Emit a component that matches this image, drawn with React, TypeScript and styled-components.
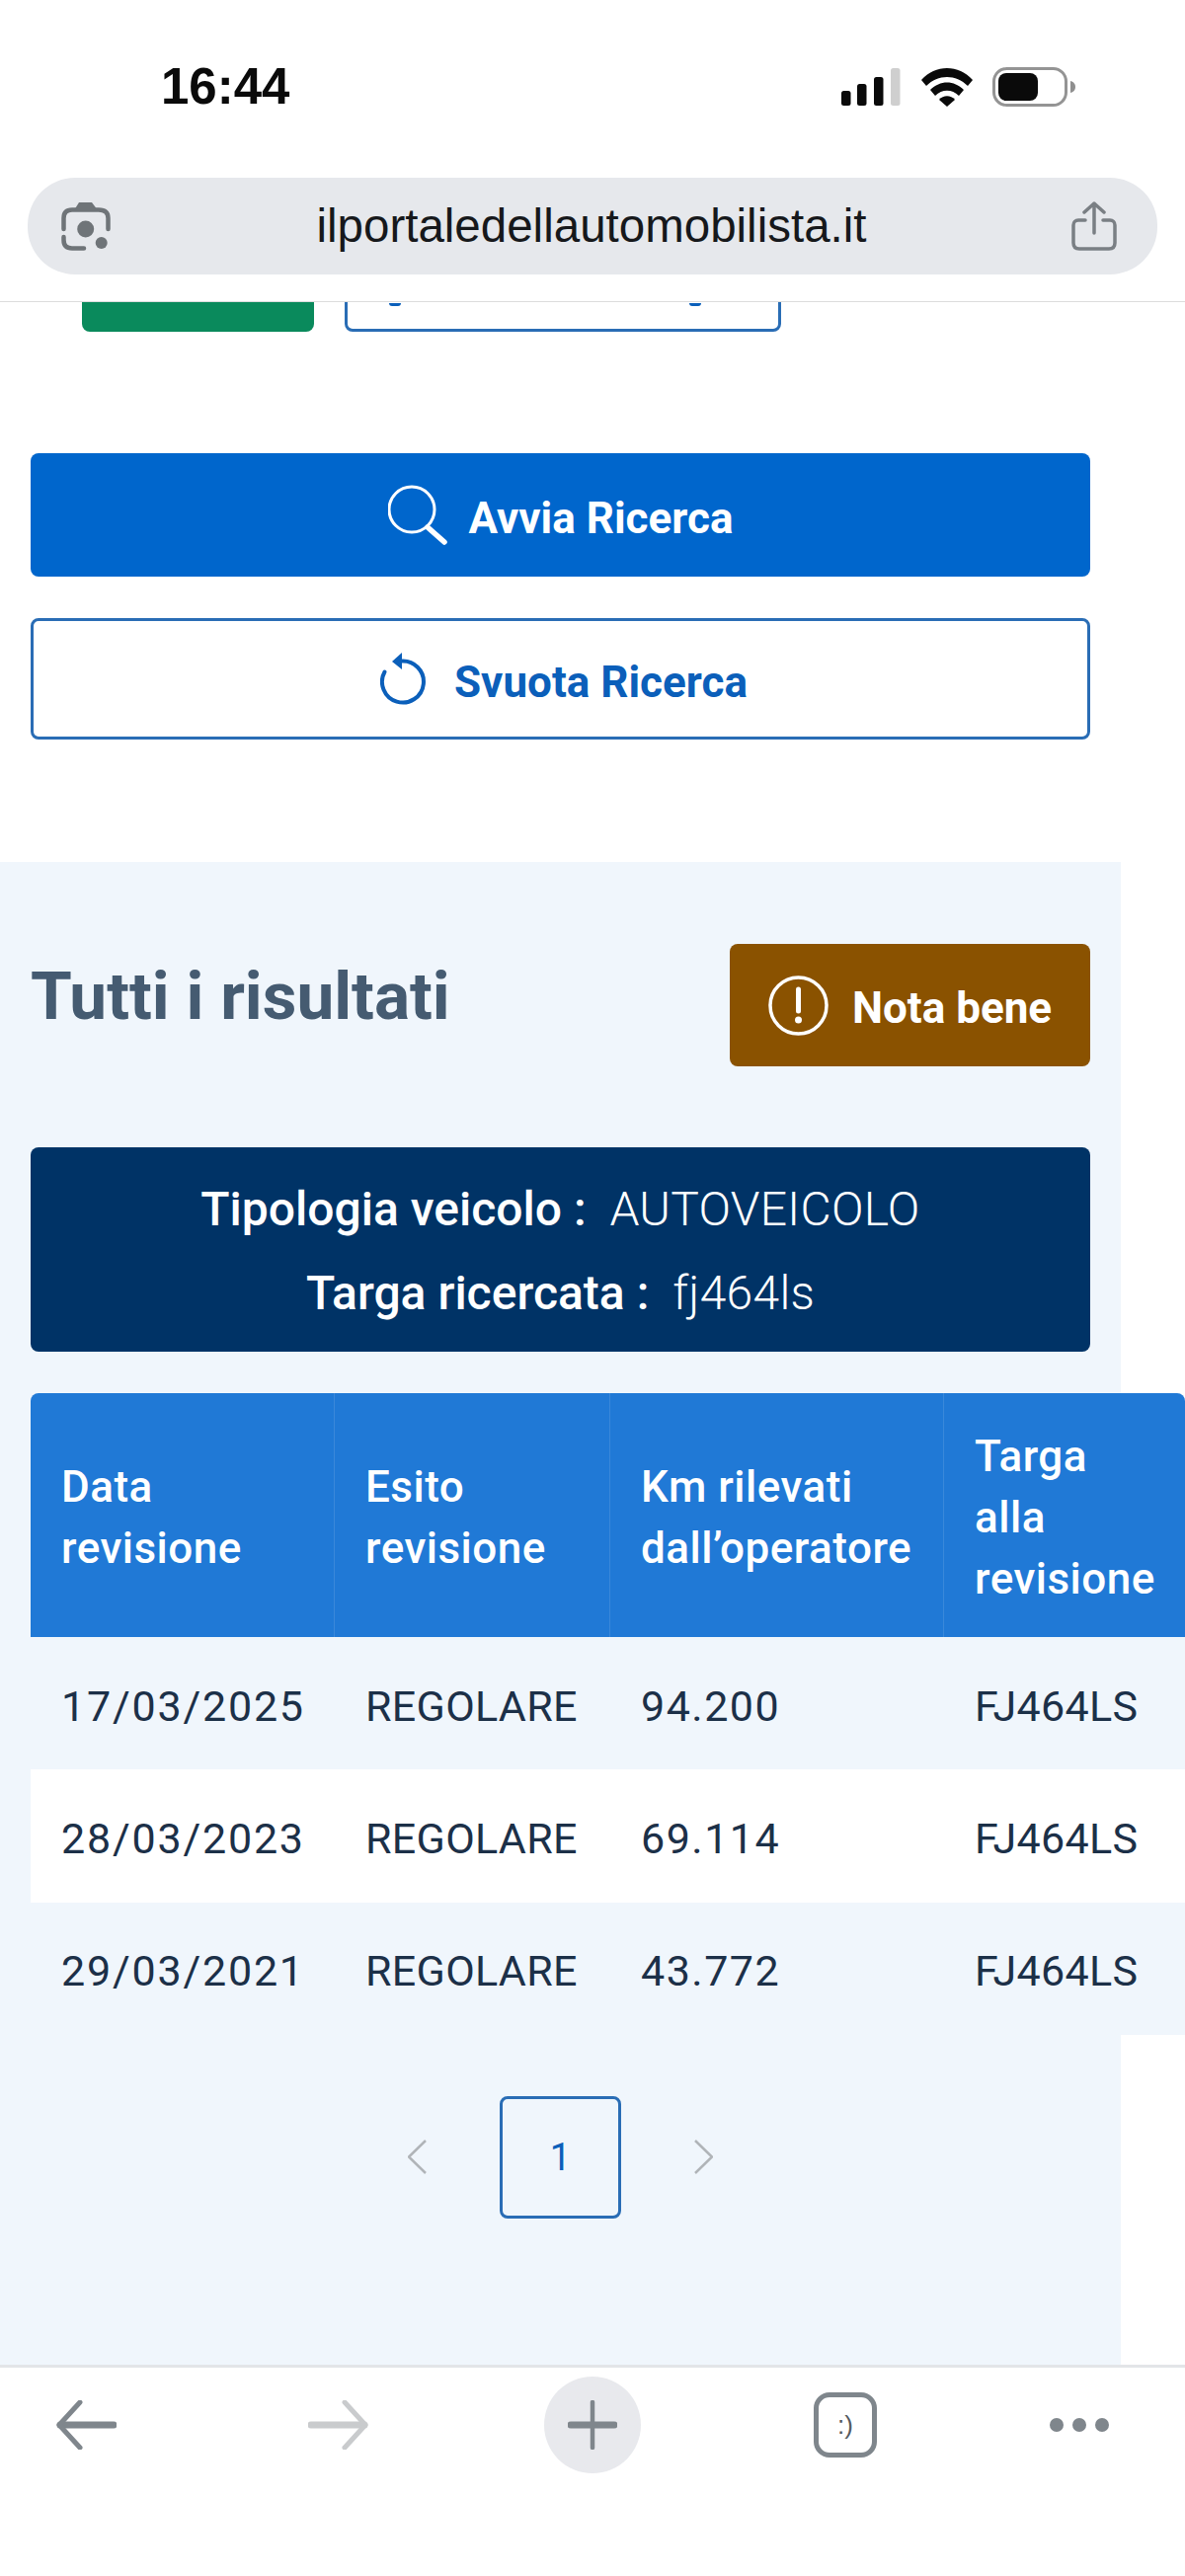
import React from 'react';
import styled, { createGlobalStyle } from 'styled-components';

const colors = {
  blue: '#0066cc',
  blueText: '#0b5fba',
  blueBorder: '#2a6db5',
  tableHead: '#2079d6',
  navy: '#003366',
  brown: '#8a5200',
  section: '#f0f6fc',
  slate: '#455b71',
  cellText: '#1c3048',
  chromeGrey: '#7f868c',
  urlBar: '#e6e8ec',
};

const siteFont = 'Roboto, "Noto Sans", sans-serif';

const GlobalStyle = createGlobalStyle`
  html, body {
    margin: 0;
    padding: 0;
    background: #fff;
  }
  * { box-sizing: border-box; }
`;

const Page = styled.div`
  width: 1200px;
  height: 2609px;
  overflow: hidden;
  display: flex;
  flex-direction: column;
  background: #fff;
  font-family: ${siteFont};
`;

const BrowserHeader = styled.header`
  height: 306px;
  flex: none;
  border-bottom: 1px solid #dcdcdc;
  padding: 0 28px;
`;

const StatusBar = styled.div`
  height: 180px;
  display: flex;
  justify-content: space-between;
  align-items: flex-start;
  padding: 68px 82px 0 135px;
`;

const Clock = styled.div`
  font-family: "Liberation Sans", sans-serif;
  font-size: 51px;
  font-weight: 700;
  line-height: 40px;
  color: #0a0a0a;
`;

const StatusIcons = styled.div`
  display: flex;
  align-items: flex-start;
  gap: 20.5px;
`;

const UrlBar = styled.div`
  height: 98px;
  border-radius: 48px;
  background: ${colors.urlBar};
  display: flex;
  align-items: center;
  justify-content: space-between;
  padding: 0 41px 0 33px;
`;

const UrlText = styled.div`
  font-family: "Liberation Sans", sans-serif;
  font-size: 47.5px;
  color: #16181b;
  line-height: 60px;
`;

const ClippedRow = styled.div`
  height: 30px;
  flex: none;
  display: flex;
  align-items: flex-end;
  gap: 31px;
  padding-left: 83px;
  overflow: hidden;
`;

const GreenStub = styled.div`
  width: 235px;
  height: 60px;
  background: #0a8a5c;
  border-radius: 0 0 8px 8px;
`;

const OutlineStub = styled.div`
  width: 442px;
  height: 60px;
  background: #fff;
  border: 3px solid ${colors.blueBorder};
  border-radius: 0 0 8px 8px;
  display: flex;
  justify-content: space-between;
  padding: 28px 78px 0 42px;
`;

const StubMark = styled.span`
  width: 12px;
  height: 3px;
  border-radius: 0 0 6px 6px;
  background: ${colors.blueText};
`;

const Actions = styled.div`
  flex: none;
  display: flex;
  flex-direction: column;
  gap: 42px;
  padding: 123px 96px 124px 31px;
`;

const ActionButton = styled.button<{ $outline?: boolean }>`
  height: ${p => (p.$outline ? 123 : 125)}px;
  width: 100%;
  border-radius: 8px;
  border: ${p => (p.$outline ? `3px solid ${colors.blueBorder}` : 'none')};
  background: ${p => (p.$outline ? '#fff' : colors.blue)};
  color: ${p => (p.$outline ? colors.blueText : '#fff')};
  display: flex;
  align-items: center;
  justify-content: center;
  gap: ${p => (p.$outline ? 29 : 21)}px;
  font-family: inherit;
  font-size: 44px;
  font-weight: 700;
  padding: 0 0 0 ${p => (p.$outline ? 7 : 0)}px;
`;

const ButtonLabel = styled.span`
  padding-top: 6px;
`;

const ResultsSection = styled.section`
  flex: 1;
  width: 1135px;
  background: ${colors.section};
  padding: 83px 31px 0;
`;

const TitleRow = styled.div`
  display: flex;
  justify-content: space-between;
  align-items: flex-start;
`;

const Title = styled.h2`
  margin: 18px 0 0;
  font-size: 67.5px;
  line-height: 70px;
  font-weight: 700;
  color: ${colors.slate};
`;

const NoteButton = styled.button`
  width: 365px;
  height: 124px;
  border: none;
  border-radius: 8px;
  background: ${colors.brown};
  color: #fff;
  display: flex;
  align-items: center;
  justify-content: center;
  gap: 24px;
  font-family: inherit;
  font-size: 44px;
  font-weight: 700;
  padding: 0;
`;

const SummaryPanel = styled.div`
  margin-top: 82px;
  height: 207px;
  border-radius: 8px;
  padding-top: 3px;
  background: ${colors.navy};
  color: #fff;
  display: flex;
  flex-direction: column;
  align-items: center;
  justify-content: center;
  gap: 25px;
  font-size: 48px;
  line-height: 60px;
`;

const SummaryLine = styled.div`
  font-weight: 500;
  white-space: pre;
`;

const SummaryValue = styled.span`
  font-weight: 300;
  letter-spacing: 0.3px;
`;

const ResultsTable = styled.table`
  margin-top: 42px;
  width: 1169px;
  table-layout: fixed;
  border-collapse: separate;
  border-spacing: 0;
`;

const HeadCell = styled.th`
  height: 247px;
  padding: 5px 0 0 31px;
  background: ${colors.tableHead};
  border-right: 1px solid #3a88da;
  color: #fff;
  text-align: left;
  font-size: 44px;
  letter-spacing: 0.5px;
  line-height: 62px;
  font-weight: 500;
  white-space: nowrap;

  &:first-child { border-top-left-radius: 8px; }
  &:last-child { border-top-right-radius: 8px; border-right: none; }
`;

const BodyRow = styled.tr<{ $striped: boolean }>`
  background: ${p => (p.$striped ? colors.section : '#fff')};
`;

const BodyCell = styled.td<{ $tracking: number }>`
  height: 134.33px;
  padding: 5px 0 0 31px;
  font-size: 43px;
  font-weight: 400;
  letter-spacing: ${p => p.$tracking}px;
  color: ${colors.cellText};
  white-space: nowrap;
`;

const Pagination = styled.nav`
  margin-top: 62px;
  display: flex;
  justify-content: center;
  align-items: center;
  gap: 74px;
`;

const PageBox = styled.div`
  width: 123px;
  height: 124px;
  border: 3px solid ${colors.blueBorder};
  border-radius: 8px;
  display: flex;
  align-items: center;
  justify-content: center;
  color: ${colors.blueText};
  font-size: 38px;
`;

const BottomBar = styled.footer`
  height: 214px;
  flex: none;
  border-top: 3px solid #e3e5e8;
  padding-top: 9px;
  background: #fff;
`;

const BarGrid = styled.div`
  height: 98px;
  display: grid;
  grid-template-columns: 174px 336px 180px 332px 142px;
  align-items: center;
  justify-items: center;
`;

const PlusCircle = styled.div`
  width: 98px;
  height: 98px;
  border-radius: 50%;
  background: #e8e9ed;
  display: flex;
  align-items: center;
  justify-content: center;
`;

const TabCount = styled.div`
  width: 64px;
  height: 66px;
  border: 5px solid ${colors.chromeGrey};
  border-radius: 16px;
  display: flex;
  align-items: center;
  justify-content: center;
  font-family: "Liberation Sans", sans-serif;
  font-size: 26px;
  color: #555b60;
`;

const Dots = styled.div`
  display: flex;
  gap: 9px;
`;

const Dot = styled.span`
  width: 14px;
  height: 14px;
  border-radius: 50%;
  background: ${colors.chromeGrey};
`;

const SignalIcon = () => (
  <svg width="60" height="39" viewBox="0 0 60 39">
    <rect x="0" y="24" width="9.5" height="15" rx="2.5" fill="#0a0a0a" />
    <rect x="16" y="17" width="9.5" height="22" rx="2.5" fill="#0a0a0a" />
    <rect x="33" y="10" width="9.5" height="29" rx="2.5" fill="#0a0a0a" />
    <rect x="50" y="1" width="9.5" height="38" rx="2.5" fill="#cfcfcf" />
  </svg>
);

const WifiIcon = () => (
  <svg width="52" height="40" viewBox="0 0 52 40" fill="#0a0a0a">
    <path d="M0 13C14 -3 38 -3 52 13L47 19C35 7 17 7 5 19Z" />
    <path d="M9 23C19 13 33 13 43 23L38 29C31 22 21 22 14 29Z" />
    <path d="M18 33C22 28 30 28 34 33L26 40Z" />
  </svg>
);

const BatteryIcon = () => (
  <svg width="85" height="40" viewBox="0 0 85 40" fill="none">
    <rect x="1.5" y="1.5" width="73" height="37" rx="13" stroke="#949494" strokeWidth="3" />
    <rect x="6" y="6" width="40" height="28" rx="8" fill="#0a0a0a" />
    <path d="M79 14C83 15 84 18 84 20C84 22 83 25 79 26Z" fill="#8f8f8f" />
  </svg>
);

const LensIcon = () => (
  <svg width="52" height="50" viewBox="0 0 52 50" fill="none" stroke="#6f7478" strokeWidth="4.5" strokeLinecap="round">
    <path d="M3.5 28V17C3.5 11 7 8.5 12 8.5H39C45 8.5 48.5 11 48.5 17V28" />
    <path d="M3.5 36V39C3.5 45 7 47.5 12 47.5H24" />
    <path d="M14 9L19 1H32L38 9Z" fill="#6f7478" stroke="none" />
    <circle cx="25.7" cy="28" r="8.5" fill="#6f7478" stroke="none" />
    <circle cx="41.7" cy="42" r="6" fill="#6f7478" stroke="none" />
  </svg>
);

const ShareIcon = () => (
  <svg width="46" height="50" viewBox="0 0 46 50" fill="none" stroke="#7a7f84" strokeWidth="3.5" strokeLinecap="round" strokeLinejoin="round">
    <path d="M14 19H7C4 19 2 21 2 24V42C2 46 4 48 8 48H38C42 48 44 46 44 42V24C44 21 42 19 39 19H32" />
    <path d="M23 32V2M13 11L23 2L33 11" />
  </svg>
);

const SearchIcon = () => (
  <svg width="61" height="61" viewBox="0 0 61 61" fill="none" stroke="#fff" strokeLinecap="round">
    <circle cx="24" cy="25" r="23" strokeWidth="3" />
    <path d="M40 43L57 58" strokeWidth="5.5" />
  </svg>
);

const ResetIcon = () => (
  <svg width="46" height="53" viewBox="0 0 46 53" fill="none" stroke={colors.blueText} strokeWidth="4">
    <path d="M21 8.6A21 21 0 1 1 4.5 19.5" strokeLinecap="round" />
    <path d="M22 0L12 9L22 17Z" fill={colors.blueText} stroke="none" />
  </svg>
);

const NoticeIcon = () => (
  <svg width="61" height="61" viewBox="0 0 61 61" fill="none" stroke="#fff">
    <circle cx="30.5" cy="30.5" r="28.5" strokeWidth="3.5" />
    <path d="M30.5 14V36" strokeWidth="5" strokeLinecap="round" />
    <circle cx="30.5" cy="45" r="3.5" fill="#fff" stroke="none" />
  </svg>
);

const PageChevron = ({ flip }: { flip?: boolean }) => (
  <svg width="19" height="35" viewBox="0 0 19 35" fill="none" stroke="#b0b4b8" strokeWidth="2.5">
    <path d={flip ? 'M1 1L18 17.5L1 34' : 'M18 1L1 17.5L18 34'} />
  </svg>
);

const ArrowIcon = ({ flip, color }: { flip?: boolean; color: string }) => (
  <svg width="61" height="50" viewBox="0 0 61 50" fill="none" stroke={color} strokeLinecap="round">
    {flip ? (
      <>
        <path d="M3 25H57" strokeWidth="7" />
        <path d="M37 2L58 25L37 48" strokeWidth="5" strokeLinejoin="round" />
      </>
    ) : (
      <>
        <path d="M4 25H58" strokeWidth="7" />
        <path d="M24 2L3 25L24 48" strokeWidth="5" strokeLinejoin="round" />
      </>
    )}
  </svg>
);

const PlusIcon = () => (
  <svg width="50" height="50" viewBox="0 0 50 50" stroke={colors.chromeGrey} strokeLinecap="round">
    <path d="M3 25H47" strokeWidth="7" />
    <path d="M25 2V48" strokeWidth="4.5" />
  </svg>
);

const columns = [
  { key: 'date', width: 308, tracking: 1.8, label: <>Data<br />revisione</> },
  { key: 'result', width: 279, tracking: 0.3, label: <>Esito<br />revisione</> },
  { key: 'km', width: 338, tracking: 1.5, label: <>Km rilevati<br />dall’operatore</> },
  { key: 'plate', width: 244, tracking: 0.3, label: <>Targa<br />alla<br />revisione</> },
];

const rows = [
  ['17/03/2025', 'REGOLARE', '94.200', 'FJ464LS'],
  ['28/03/2023', 'REGOLARE', '69.114', 'FJ464LS'],
  ['29/03/2021', 'REGOLARE', '43.772', 'FJ464LS'],
];

const App: React.FC = () => {
  return (
    <Page>
      <GlobalStyle />
      <BrowserHeader>
        <StatusBar>
          <Clock>16:44</Clock>
          <StatusIcons>
            <SignalIcon />
            <WifiIcon />
            <BatteryIcon />
          </StatusIcons>
        </StatusBar>
        <UrlBar>
          <LensIcon />
          <UrlText>ilportaledellautomobilista.it</UrlText>
          <ShareIcon />
        </UrlBar>
      </BrowserHeader>

      <ClippedRow>
        <GreenStub />
        <OutlineStub>
          <StubMark />
          <StubMark />
        </OutlineStub>
      </ClippedRow>

      <Actions>
        <ActionButton>
          <SearchIcon />
          <ButtonLabel>Avvia Ricerca</ButtonLabel>
        </ActionButton>
        <ActionButton $outline>
          <ResetIcon />
          <ButtonLabel>Svuota Ricerca</ButtonLabel>
        </ActionButton>
      </Actions>

      <ResultsSection>
        <TitleRow>
          <Title>Tutti i risultati</Title>
          <NoteButton>
            <NoticeIcon />
            <ButtonLabel>Nota bene</ButtonLabel>
          </NoteButton>
        </TitleRow>

        <SummaryPanel>
          <SummaryLine>
            Tipologia veicolo :  <SummaryValue>AUTOVEICOLO</SummaryValue>
          </SummaryLine>
          <SummaryLine>
            Targa ricercata :  <SummaryValue>fj464ls</SummaryValue>
          </SummaryLine>
        </SummaryPanel>

        <ResultsTable>
          <colgroup>
            {columns.map(c => (
              <col key={c.key} width={c.width} />
            ))}
          </colgroup>
          <thead>
            <tr>
              {columns.map(c => (
                <HeadCell key={c.key}>{c.label}</HeadCell>
              ))}
            </tr>
          </thead>
          <tbody>
            {rows.map((row, i) => (
              <BodyRow key={row[0]} $striped={i % 2 === 0}>
                {row.map((value, col) => (
                  <BodyCell key={value} $tracking={columns[col].tracking}>
                    {value}
                  </BodyCell>
                ))}
              </BodyRow>
            ))}
          </tbody>
        </ResultsTable>

        <Pagination>
          <PageChevron />
          <PageBox>1</PageBox>
          <PageChevron flip />
        </Pagination>
      </ResultsSection>

      <BottomBar>
        <BarGrid>
          <ArrowIcon color={colors.chromeGrey} />
          <ArrowIcon flip color="#c9cbcd" />
          <PlusCircle>
            <PlusIcon />
          </PlusCircle>
          <TabCount>:)</TabCount>
          <Dots>
            <Dot />
            <Dot />
            <Dot />
          </Dots>
        </BarGrid>
      </BottomBar>
    </Page>
  );
};

export default App;
